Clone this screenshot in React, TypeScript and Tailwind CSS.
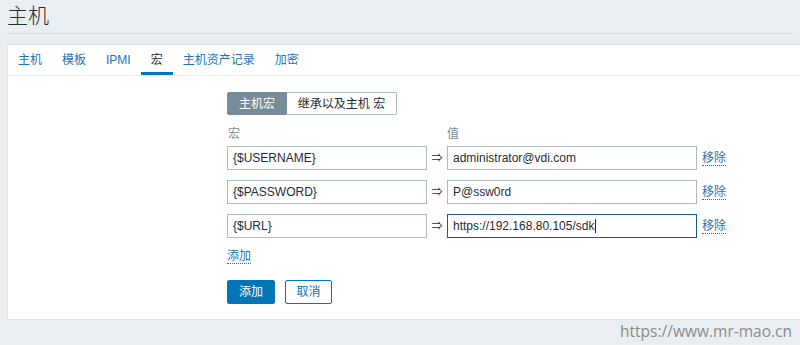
import React from "react";

const FONT = "font-['Liberation_Sans','Noto_Sans_CJK_SC',sans-serif]";

const tabs = ["主机", "模板", "IPMI", "宏", "主机资产记录", "加密"];

const macros = [
  { name: "{$USERNAME}", value: "administrator@vdi.com" },
  { name: "{$PASSWORD}", value: "P@ssw0rd" },
  { name: "{$URL}", value: "https://192.168.80.105/sdk", focused: true },
];

function MacroRow({ name, value, focused }: { name: string; value: string; focused?: boolean }) {
  return (
    <div className="flex items-center h-[24px]">
      <div className="w-[200px] h-[24px] border border-[#acbbc4] bg-white px-[5px] flex items-center text-[12px] text-[#1f2c33]">
        {name}
      </div>
      <div className="w-[20px] text-center text-[11px] text-[#1f2c33]">⇒</div>
      <div
        className={`w-[250px] h-[24px] border bg-white px-[5px] flex items-center text-[12px] text-[#1f2c33] ${
          focused ? "border-[#1a5b8e]" : "border-[#acbbc4]"
        }`}
      >
        {value}
        {focused && <span className="w-px h-[14px] bg-[#1f2c33] ml-px" />}
      </div>
      <a className="ml-[5px] text-[12px] text-[#1e74b5] border-b border-dotted border-[#1e74b5] leading-[14px] cursor-pointer">
        移除
      </a>
    </div>
  );
}

export default function App() {
  return (
    <div className={`w-[800px] h-[345px] bg-[#ebeef0] overflow-hidden ${FONT}`}>
      <div className="h-[34px] mx-[7px] border-b border-[#d5d9dc] flex items-center">
        <h1 className="text-[21px] leading-none text-[#1f2c33] font-light -mt-[2px]">主机</h1>
      </div>

      <div className="ml-[7px] mt-[10px] bg-white border border-[#dfe4e7] border-r-0 h-[276px]">
        <div className="flex h-[31px] border-b border-[#ebeef0]">
          {tabs.map((t) => (
            <div
              key={t}
              className={`px-[10px] flex items-center text-[12px] ${
                t === "宏"
                  ? "text-[#1f2c33] border-b-[3px] border-[#0275b8] pt-[3px]"
                  : "text-[#1e74b5]"
              }`}
            >
              {t}
            </div>
          ))}
        </div>

        <div className="pl-[219px] pt-[16px]">
          <div className="flex h-[23px] text-[12px]">
            <div className="w-[60px] flex items-center justify-center bg-[#768d99] text-white rounded-l-[2px] border border-[#768d99]">
              主机宏
            </div>
            <div className="w-[110px] flex items-center justify-center text-[#1f2c33] border border-l-0 border-[#acbbc4] rounded-r-[2px]">
              继承以及主机 宏
            </div>
          </div>

          <div className="flex mt-[10px] h-[16px] text-[12px] text-[#768d99]">
            <div className="w-[220px] pl-px">宏</div>
            <div>值</div>
          </div>

          <div className="flex flex-col gap-[10px] mt-[5px]">
            {macros.map((m) => (
              <MacroRow key={m.name} {...m} />
            ))}
          </div>

          <div className="mt-[11px] h-[16px] flex items-start text-[12px]">
            <a className="text-[#1e74b5] border-b border-dotted border-[#1e74b5] leading-[14px] cursor-pointer">
              添加
            </a>
          </div>

          <div className="flex gap-[10px] mt-[15px]">
            <button className="w-[48px] h-[24px] bg-[#0275b8] border border-[#0275b8] rounded-[2px] text-white text-[12px]">
              添加
            </button>
            <button className="w-[47px] h-[24px] bg-white border border-[#0275b8] rounded-[2px] text-[#0275b8] text-[12px]">
              取消
            </button>
          </div>
        </div>
      </div>

      <div className="pr-[8px] text-right text-[15.5px] leading-[22px] text-[#8c8c8c] font-['Open_Sans',sans-serif]">
        https://www.mr-mao.cn
      </div>
    </div>
  );
}
